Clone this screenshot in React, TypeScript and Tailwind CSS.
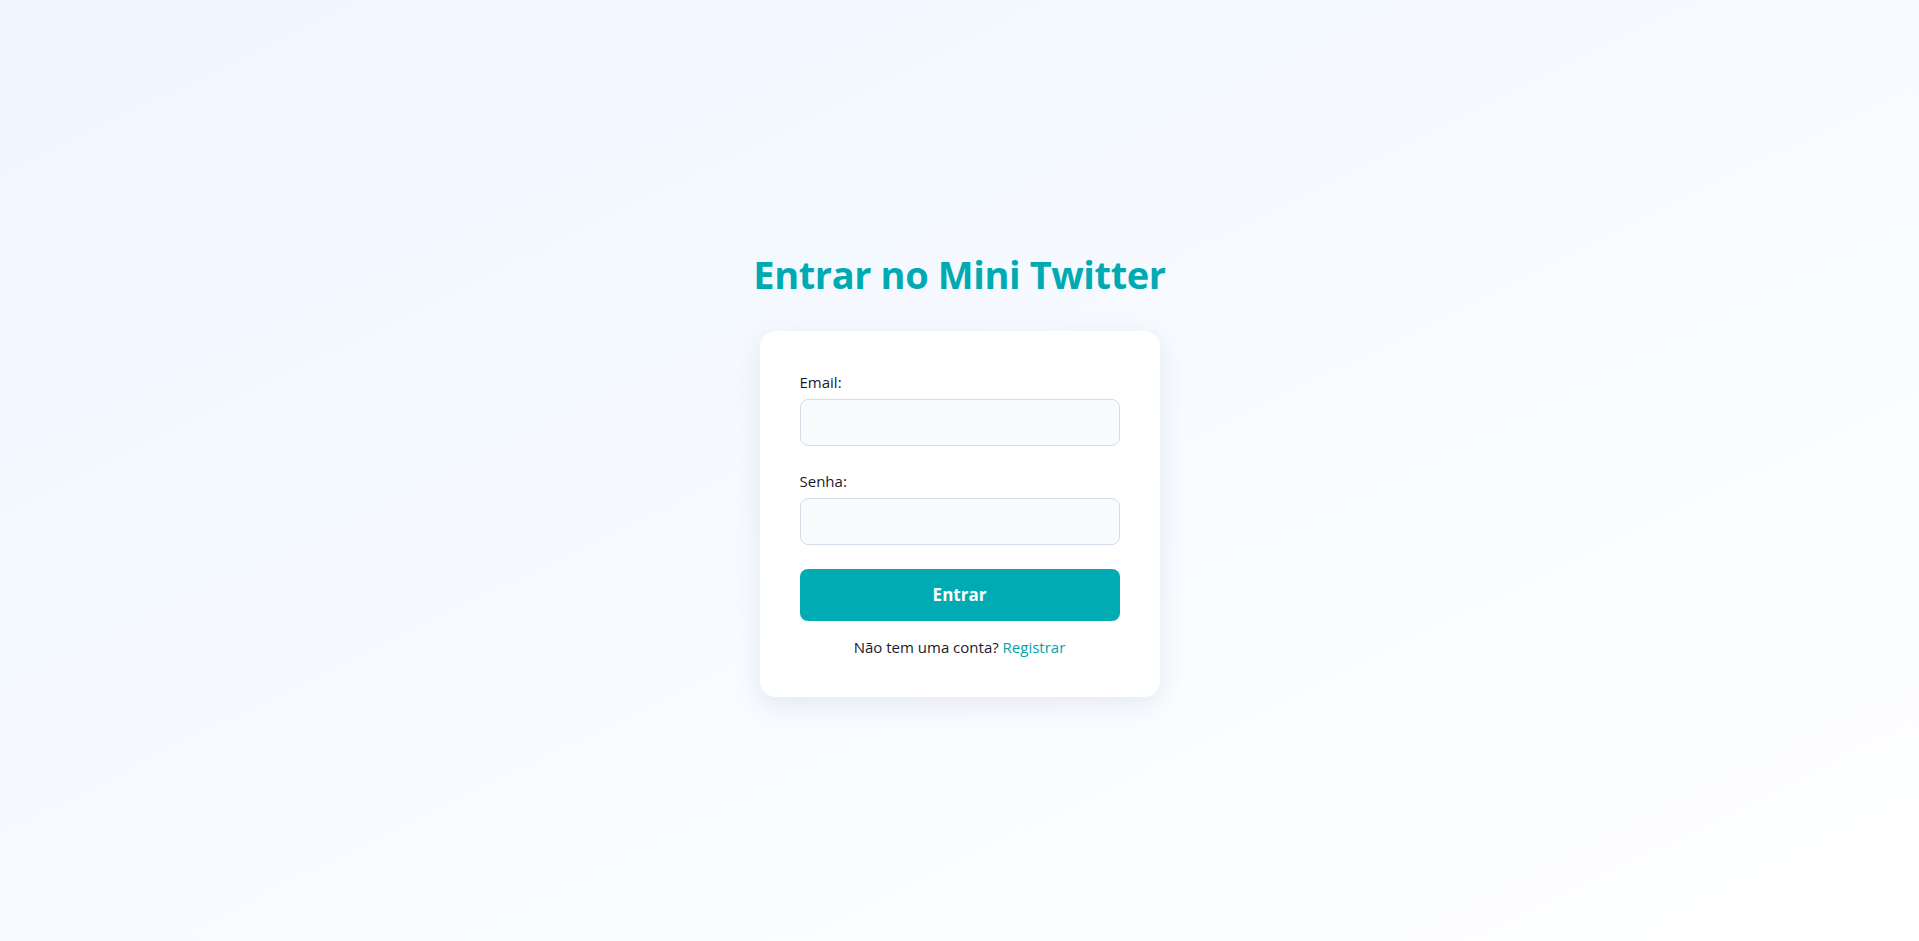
import React, { useState } from 'react';

const App: React.FC = () => {
  const [email, setEmail] = useState('');
  const [senha, setSenha] = useState('');

  return (
    <div className="min-h-screen w-full flex flex-col items-center justify-center pt-[5px] bg-gradient-to-br from-[#eff6ff] to-[#ffffff] font-['Open_Sans',sans-serif] text-[#1a1a2b]">
      <h1 className="text-[38px] leading-[48px] font-bold text-[#00aab2] mb-[33px] tracking-[-0.4px]">Entrar no Mini Twitter</h1>
      <div className="w-[400px] bg-white rounded-2xl shadow-[0_8px_28px_rgba(30,60,90,0.09)] p-10">
        <form onSubmit={e => e.preventDefault()}>
          <label className="block text-[15px] leading-[22px] mb-[6px]">Email:</label>
          <input
            value={email}
            onChange={e => setEmail(e.target.value)}
            type="email"
            className="block w-full h-[47px] rounded-lg border border-[#d3deea] bg-[#f8fafc] px-3 mb-[24px] outline-none"
          />
          <label className="block text-[15px] leading-[22px] mb-[6px]">Senha:</label>
          <input
            value={senha}
            onChange={e => setSenha(e.target.value)}
            type="password"
            className="block w-full h-[47px] rounded-lg border border-[#d3deea] bg-[#f8fafc] px-3 mb-[24px] outline-none"
          />
          <button type="submit" className="w-full h-[52px] rounded-lg bg-[#00abb3] text-white font-bold text-[17px]">Entrar</button>
        </form>
        <p className="text-center text-[15px] leading-[20px] mt-[16px]">
          Não tem uma conta? <a href="#" className="text-[#00a3ad]">Registrar</a>
        </p>
      </div>
    </div>
  );
};

export default App;
